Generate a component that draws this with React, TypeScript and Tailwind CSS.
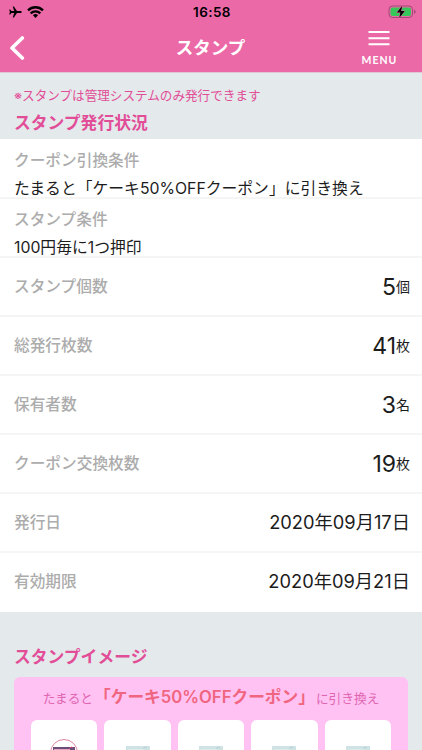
import React from 'react';

interface Row {
    label: string;
    value: string;
    unit?: string;
}

const rows: Row[] = [
    { label: 'スタンプ個数', value: '5', unit: '個' },
    { label: '総発行枚数', value: '41', unit: '枚' },
    { label: '保有者数', value: '3', unit: '名' },
    { label: 'クーポン交換枚数', value: '19', unit: '枚' },
    { label: '発行日', value: '2020年09月17日' },
    { label: '有効期限', value: '2020年09月21日' },
];

function StatusBar() {
    return (
        <div className="flex h-6 items-center justify-between pl-[9px] pr-[6px] text-black">
            <div className="flex w-[80px] items-center gap-[5px]">
                <svg width="13" height="12" viewBox="0 0 13 12" fill="currentColor">
                    <path d="M12.8 6c0-.6-.8-1-1.8-1H8L4.9.5H3.7L5.2 5H2.4L1.2 3.4H.2L.9 6l-.7 2.6h1L2.4 7h2.8l-1.5 4.5h1.2L8 7h3c1 0 1.8-.4 1.8-1z" />
                </svg>
                <svg width="17" height="12" viewBox="0 0 17 12" fill="none" stroke="currentColor" strokeWidth="2.4">
                    <path d="M1 4.3a10.8 10.8 0 0 1 15 0" />
                    <path d="M3.7 7.3a7 7 0 0 1 9.6 0" />
                    <path d="M8.5 12 5.9 9.3a3.8 3.8 0 0 1 5.2 0z" fill="currentColor" stroke="none" />
                </svg>
            </div>
            <span className="pr-px text-[13.5px] font-semibold tracking-[0.4px]">16:58</span>
            <div className="flex w-[80px] justify-end">
                <svg width="28" height="14" viewBox="0 0 28 14">
                    <rect x="1" y="1" width="23.5" height="11.5" rx="3.5" fill="none" stroke="#a04a74" />
                    <rect x="2.5" y="2.5" width="20.5" height="8.5" rx="2" fill="#35c759" />
                    <path d="M26 4.8v4c1-.3 1.6-1.1 1.6-2S27 5.1 26 4.8z" fill="#a04a74" />
                    <path d="M14.3.8 8.8 7.5h3.6l-1.2 5.4 5.6-6.8h-3.7z" fill="#000" stroke="#ec69a8" strokeWidth="1" paintOrder="stroke" />
                </svg>
            </div>
        </div>
    )
}

function Header() {
    return (
        <header className="h-[73px] border-b border-[#e0c8d4] bg-[#ec69a8]">
            <StatusBar />
            <div className="flex h-12 items-center justify-between pl-[9px] pr-[25px] text-white">
                <button className="w-[36px]">
                    <svg width="16" height="24" viewBox="0 0 16 24" fill="none" stroke="currentColor" strokeWidth="3.6" strokeLinecap="round" strokeLinejoin="round">
                        <path d="M13.3 2 3 12l10.3 10" />
                    </svg>
                </button>
                <h1 className="pl-[15px] text-[17.5px] font-bold leading-6">スタンプ</h1>
                <button className="flex w-[36px] flex-col items-center">
                    <svg width="22" height="17" viewBox="0 0 22 17" stroke="currentColor" strokeWidth="2">
                        <path d="M.5 2h21M.5 8.2h21M.5 14.2h21" />
                    </svg>
                    <span className="mt-[6px] pl-px font-[Lato,sans-serif] text-[10.5px] font-bold leading-[14px] tracking-[1px]">MENU</span>
                </button>
            </div>
        </header>
    )
}

function TextRow({ label, value }: Row) {
    return (
        <li className="h-[59px] border-b-2 border-[#f5f5f5] px-[14px] pt-[9px] first:h-[60px] first:pt-[10px]">
            <p className="text-[15.7px] font-medium leading-6 text-[#acacac]">{label}</p>
            <p className="mt-[4px] text-[15.8px] leading-6 text-[#1c1c1c]">{value}</p>
        </li>
    )
}

function ValueRow({ label, value, unit }: Row) {
    return (
        <li className="flex h-[59px] items-center justify-between border-b-2 border-[#f5f5f5] pl-[14px] pr-[12px] last:border-white">
            <span className="text-[15.7px] font-medium text-[#acacac]">{label}</span>
            {unit ? (
                <span className="flex items-center text-[#1c1c1c]">
                    <span className="pt-px text-[23px] leading-7">{value}</span>
                    <span className="pt-px text-[14px] leading-6">{unit}</span>
                </span>
            ) : (
                <span className="text-[18.3px] text-[#1c1c1c]">{value}</span>
            )}
        </li>
    )
}

function CakeIcon({ stamped }: { stamped: boolean }) {
    return (
        <svg width="30" height="30" viewBox="0 0 30 30" fill="none">
            {stamped && <circle cx="15" cy="15" r="13.5" fill="#fff" stroke="#df82a5" />}
            <path d={stamped ? 'M4 9h22v13H4z' : 'M3 8h24v14H3z'} fill={stamped ? '#6b4f7b' : '#cfe3e5'} />
            <path d="M5 11h16v1.5H5z" fill={stamped ? '#e7a3bd' : '#dcebed'} />
            <path d="M20 11l2-2 2 1" stroke={stamped ? '#c43f67' : '#b5ced1'} />
        </svg>
    )
}

export default function App() {
    return (
        <div className="h-[750px] w-[422px] overflow-hidden bg-[#e4e9eb] font-[Inter,'Noto_Sans_CJK_JP',sans-serif]">
            <Header />

            <div className="h-[66px] px-[14px] pt-[13px] text-[#e24d98]">
                <p className="text-[12.6px] leading-5">※スタンプは管理システムのみ発行できます</p>
                <h2 className="mt-[5px] text-[16.8px] font-bold leading-6">スタンプ発行状況</h2>
            </div>

            <ul className="bg-white">
                <TextRow label="クーポン引換条件" value="たまると「ケーキ50%OFFクーポン」に引き換え" />
                <TextRow label="スタンプ条件" value="100円毎に1つ押印" />
                {rows.map((row: Row) => (
                    <ValueRow key={row.label} {...row} />
                ))}
            </ul>

            <div className="px-[14px] pt-[33px]">
                <h2 className="text-[16.8px] font-bold leading-6 text-[#e24d98]">スタンプイメージ</h2>
                <div className="mt-[8px] h-[120px] w-[394px] rounded-md bg-[#ffc2f3] px-[17px] pt-[8px]">
                    <p className="flex h-6 items-baseline justify-center whitespace-nowrap leading-6 text-[#e066b0]">
                        <span className="text-[12.7px]">たまると</span>
                        <span className="mx-[1px] text-[16.7px] font-semibold text-[#f0657f]">「ケーキ50%OFFクーポン」</span>
                        <span className="text-[12.7px]">に引き換え</span>
                    </p>
                    <div className="mt-[11px] flex gap-[7px]">
                        {[0, 1, 2, 3, 4].map((i) => (
                            <div key={i} className="flex h-[80px] flex-1 justify-center rounded-md bg-white pt-[18px]">
                                <CakeIcon stamped={i === 0} />
                            </div>
                        ))}
                    </div>
                </div>
            </div>
        </div>
    )
}
